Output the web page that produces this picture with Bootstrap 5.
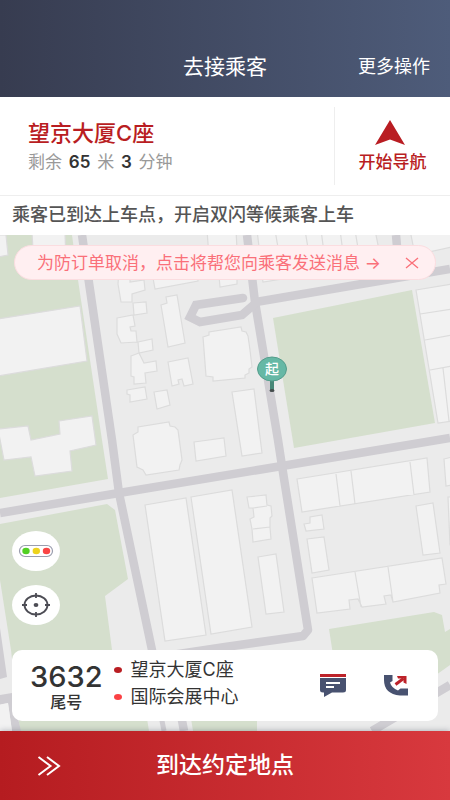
<!DOCTYPE html>
<html lang="zh-CN">
<head>
<meta charset="utf-8">
<meta name="viewport" content="width=device-width, initial-scale=1">
<title>去接乘客</title>
<link rel="stylesheet" href="https://cdn.jsdelivr.net/npm/bootstrap@5.3.0/dist/css/bootstrap.min.css">
<style>
  body { font-family: Inter, "Noto Sans CJK SC", sans-serif; color: #333; background: #fff; }
  .top-bar { background: linear-gradient(90deg, #373c50, #4e5c7a); padding: 49px 20px 12px; display: grid; grid-template-columns: 1fr auto 1fr; }
  .top-bar h1 { font-size: 21px; line-height: 36px; font-weight: 400; grid-column: 2; }
  .text-action { font-size: 18px; line-height: 36px; }
  .plain-btn { background: none; border: 0; padding: 0; }
  .brand-red { color: #b91d22; }
  .dest { min-height: 98px; padding-left: 28px; }
  .dest h2 { font-size: 22px; line-height: 32px; font-weight: 500; }
  .remain { font-size: 17px; line-height: 26px; color: #999; }
  .remain strong { color: #333; font-weight: 600; margin: 0 2px; }
  .nav-start { width: 116px; border-left: 1px solid #eee; font-size: 17px; line-height: 24px; font-weight: 500; margin: 10px 0; }
  .nav-start svg { margin: 0 6px 4px 0; }
  .status { font-size: 18px; line-height: 38px; border-top: 1px solid #eee; padding: 0 12px 1px; font-weight: 500; color: #555; }
  .map-area { padding: 10px 12px; }
  .map-canvas { position: absolute; inset: 0; width: 100%; height: 100%; z-index: -1; }
  .notice { background: #ffeff1; border: 1px solid #fbdde0; color: #fa7079; height: 35px; margin: 0 2px; padding: 0 16px 0 22px; }
  .notice a { font-size: 17px; line-height: 32px; color: inherit; }
  .round-btn { width: 48px; height: 40px; border-radius: 50%; background: #fff; }
  .tools { gap: 14px; margin-bottom: 25px; }
  .trip { border-radius: 10px; height: 71px; padding: 0 28px 0 18px; }
  .tail-no { font-size: 29px; line-height: 28px; font-weight: 500; }
  .tail-label { font-size: 16px; line-height: 22px; font-weight: 500; margin-bottom: 4px; }
  .stops { margin: 0 0 5px 11px; }
  .stops li { font-size: 18px; line-height: 27px; gap: 9px; }
  .stop-dot { width: 8px; height: 6px; border-radius: 50%; background: #fb4144; }
  .stop-dot.from { background: #b91d22; }
  .contact { gap: 35px; }
  .arrive { background: linear-gradient(90deg, #b51c20, #d8393e); height: 69px; font-size: 23px; font-weight: 500; display: grid; grid-template-columns: 1fr auto 1fr; align-items: center; padding: 0 37px; box-shadow: 0 0 6px rgba(60, 70, 90, .4); z-index: 1; }
</style>
<script src="https://cdn.jsdelivr.net/npm/bootstrap@5.3.0/dist/js/bootstrap.bundle.min.js"></script>
</head>
<body class="min-vh-100 d-flex flex-column">
<header class="top-bar text-white">
  <h1 class="m-0">去接乘客</h1>
  <button type="button" class="plain-btn text-action text-white text-end">更多操作</button>
</header>
<section class="dest d-flex">
  <div class="flex-grow-1 d-flex flex-column justify-content-center">
    <h2 class="m-0 brand-red">望京大厦C座</h2>
    <div class="remain">剩余 <strong>65</strong> 米 <strong>3</strong> 分钟</div>
  </div>
  <button type="button" class="plain-btn nav-start brand-red d-flex flex-column align-items-center justify-content-center">
    <svg width="32" height="27" viewBox="0 0 32 27" aria-hidden="true"><path d="M16 1 31 26 16 20.500 1 26Z" fill="#b91d22"/></svg>
    开始导航
  </button>
</section>
<p class="status m-0">乘客已到达上车点，开启双闪等候乘客上车</p>
<main class="map-area position-relative z-0 flex-grow-1 d-flex flex-column overflow-hidden">
  <svg class="map-canvas" viewBox="0 235 450 496" preserveAspectRatio="xMidYMid slice" role="img" aria-label="地图">
    <rect y="235" width="450" height="496" fill="#ebebeb"/>
    <g fill="#d5dfcd">
      <path d="M0 235H72L78 280 102 440 108 479 0 498Z"/>
      <path d="M273 318 412 290 435 423 294 448Z"/>
      <path d="M0 524 107 504 115 510 128 579 105 596 112 650 148 731H20L11 650 0 580Z"/>
      <path d="M120 700H144L149 731H120ZM188 700H257V731H193Z"/>
      <path d="M329 629 434 612 442 615 445 632 450 629V665L380 715 340 700Z"/>
    </g>
    <g fill="none" stroke="#cfcdd2" stroke-width="8.500" stroke-linejoin="round">
      <path d="M82 235 112 440 119 493 152 650 161 700"/>
      <path d="M0 513 119 493 282 466 450 438"/>
      <path d="M247 235 255 302 278 440 282 466 308 630 303 636 225 647 152 658"/>
      <path d="M396 235 400 280M256 302 450 269"/>
      <path d="M243 298 196 305 190 317 200 322 242 315 257 302" stroke-linecap="round" stroke-linejoin="miter"/>
      <path d="M450 685 372 731M181 715 184 731"/>
      <path d="M158 700 164 731" stroke-width="5"/>
    </g>
    <path d="M0 628 7 677 0 679ZM0 695 12 693 21 731H12L8 703 0 705Z" fill="#cfcdd2"/>
    <g fill="#f2f2f2" stroke="#dcdcdc" stroke-width="1.200">
      <path d="M-2 235H6L8 255-2 257ZM32 233H65L66 262 34 266ZM-2 319 80 306 87 361-2 376Z"/>
      <path d="M-2 429 28 426 31 440 60 434 59 421 92 416 96 445 70 451 72 471 35 476 31 457 4 460Z"/>
      <path d="M207 230 210 270 225 272 238 268 236 230ZM257 230 262 272 380 255 375 230ZM275 230 281 265M305 230 310 260M321 230 325 260M340 230 344 260M355 230 360 260M410 230 415 255 452 247V230Z"/>
      <path d="M119 270 118 284 121 302 132 302 132 294 145 290 144 280 130 282V270ZM133 303 146 302 147 313 134 315ZM117 318 133 315 135 326 130 327 131 331 136 331 137 342 121 343 117 334ZM138 342 152 339 153 350 139 353ZM131 356 139 353 144 363 156 361 157 371 145 373 146 383 134 384 134 377 131 376ZM127 390 145 387 147 399 130 402 130 395 127 394ZM154 392 167 390 170 405 157 409Z"/>
      <path d="M153 278 197 270 198 281 155 289ZM161 305 167 303 166 297 177 295 185 343 168 347ZM168 362 188 358 193 384 184 386 182 379 178 380 179 384 172 386ZM219 276 237 272V284L220 287ZM262 276 300 270 301 276 263 282Z"/>
      <path d="M203 337 209 335V332L241 327 242 331 246 332 248 336 250 350 252 367 249 369 249 373 245 375V378L213 381V377L206 376Z"/>
      <path d="M133 435 138 432V427L169 422 170 426 175 427 178 430 182 460 180 465 179 470 146 475 143 470 137 467Z"/>
      <path d="M232 392 254 389 262 453 242 456ZM194 442 224 438 226 456 196 461ZM145 505 186 498 206 635 165 641ZM191 497 232 490 252 627 211 634Z"/>
      <path d="M247 497 266 495 267 505 271 506 272 516 270 518 270 527 271 539 253 542 252 529 250 519 254 517 253 508 249 508ZM253 508 267 506M253 529 270 527M258 557 276 554 284 612 266 614Z"/>
      <path d="M297 479 427 458 430 492 302 512ZM336 474 340 506M351 471 355 504M410 462 414 495M304 524 310 523V517L322 515 324 529 306 531ZM307 539 324 537 329 570 312 573ZM416 506 433 503 440 553 423 555ZM312 578 442 558 446 584 439 585 440 593 393 602 391 595 384 596 386 604 362 607 358 599 349 600 350 609 317 613ZM355 572 361 607M388 567 393 602"/>
      <path d="M416 290 452 284V421L438 423ZM420 314 452 309M425 340 452 335M430 370 452 366M443 368 449 421M444 459 452 457V485L446 486ZM448 497H452V545L450 545Z"/>
      <path d="M-2 705 8 703 12 731H-2Z" stroke="none"/>
    </g>
    <g transform="translate(272 369)">
      <path d="M0 10V21" stroke="#478777" stroke-width="4"/><ellipse cy="21.500" rx="2.500" ry="1.500" fill="#444c4c"/>
      <ellipse rx="14.500" ry="12" fill="#66b8a5" stroke="#549c8b"/>
      <text y="5" text-anchor="middle" font-size="14" font-weight="500" fill="#fff">起</text>
    </g>
  </svg>
  <div class="notice rounded-pill d-flex align-items-center justify-content-between">
    <a href="#message" class="text-decoration-none text-nowrap">为防订单取消，点击将帮您向乘客发送消息 →</a>
    <button type="button" class="plain-btn d-flex" aria-label="关闭"><svg width="14" height="12" viewBox="0 0 14 12" stroke="#fa7079" stroke-width="1.300"><path d="M1 1 13 11M13 1 1 11"/></svg></button>
  </div>
  <div class="tools mt-auto d-flex flex-column">
    <button type="button" class="plain-btn round-btn d-flex align-items-center justify-content-center" aria-label="路况">
      <svg width="36" height="14" viewBox="0 0 36 14"><rect x="1.500" y="1.500" width="33" height="11" rx="5.500" fill="#fff" stroke="#9a9dae" stroke-width="1.200"/><ellipse cx="8" cy="7" rx="3.700" ry="3.200" fill="#52d023"/><ellipse cx="18.300" cy="7" rx="3.700" ry="3.200" fill="#edd31d"/><ellipse cx="28.500" cy="7" rx="3.700" ry="3.200" fill="#fa4545"/></svg>
    </button>
    <button type="button" class="plain-btn round-btn d-flex align-items-center justify-content-center" aria-label="定位">
      <svg width="30" height="26" viewBox="0 0 30 26" fill="none" stroke="#4c4c54" stroke-width="1.800"><ellipse cx="15" cy="13" rx="11.500" ry="9.500"/><path d="M15 1V6M15 20V25M1 13H6M24 13H29"/><ellipse cx="15" cy="13" rx="2.400" ry="2" fill="#4c4c54" stroke="none"/></svg>
    </button>
  </div>
  <section class="trip bg-white d-flex align-items-center">
    <div class="text-center pt-2">
      <div class="tail-no">3632</div>
      <div class="tail-label">尾号</div>
    </div>
    <ul class="stops list-unstyled flex-grow-1">
      <li class="d-flex align-items-center"><span class="stop-dot from"></span>望京大厦C座</li>
      <li class="d-flex align-items-center"><span class="stop-dot"></span>国际会展中心</li>
    </ul>
    <div class="contact d-flex">
      <button type="button" class="plain-btn d-flex" aria-label="发消息"><svg width="28" height="24" viewBox="0 0 28 24"><path d="M1 0H27V3H1Z" fill="#bd2229"/><path d="M1 4H27V16Q27 18.500 24 18.500H13L5 23V18.500H4Q1 18.500 1 16Z" fill="#485270"/><path d="M7 9H21M7 13H15" stroke="#fff" stroke-width="1.800"/></svg></button>
      <button type="button" class="plain-btn d-flex" aria-label="打电话"><svg width="28" height="24" viewBox="0 0 28 24"><path d="M2 1H10.500V7L8 8.500Q9.500 14 16 16.500L18.500 14.500H26V21.500H18Q2 20 2 6Z" fill="#485270"/><path d="M13.500 10.500 21.500 4.500" stroke="#bd2229" stroke-width="3"/><path d="M15 2H24.500V10L21.500 8.500V4.500H16Z" fill="#bd2229"/></svg></button>
    </div>
  </section>
</main>
<button type="button" class="plain-btn arrive text-white w-100">
  <svg width="24" height="20" viewBox="0 0 24 20" fill="none" stroke="#fff" stroke-width="2"><path d="M1.500 1 13.500 10 1.500 19M10 1 22 10 10 19"/></svg>
  <span>到达约定地点</span>
</button>
</body>
</html>
